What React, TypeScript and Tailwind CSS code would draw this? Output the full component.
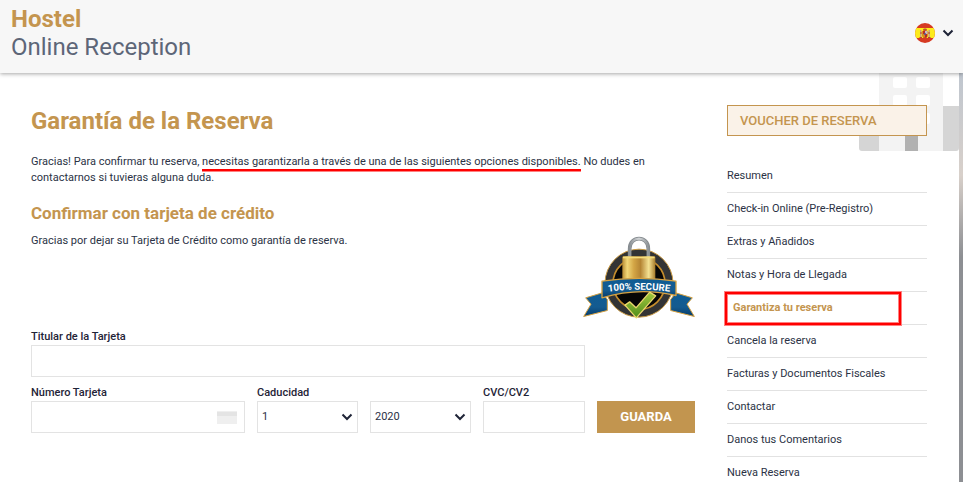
import { useState } from 'react';
import { clsx } from 'clsx';

interface MenuItem {
  readonly label: string;
  readonly active?: boolean;
}

const MENU_ITEMS: readonly MenuItem[] = [
  { label: 'Resumen' },
  { label: 'Check-in Online (Pre-Registro)' },
  { label: 'Extras y Añadidos' },
  { label: 'Notas y Hora de Llegada' },
  { label: 'Garantiza tu reserva', active: true },
  { label: 'Cancela la reserva' },
  { label: 'Facturas y Documentos Fiscales' },
  { label: 'Contactar' },
  { label: 'Danos tus Comentarios' },
  { label: 'Nueva Reserva' },
];

const MONTHS = ['1', '2', '3', '4', '5', '6', '7', '8', '9', '10', '11', '12'];
const YEARS = ['2020', '2021', '2022', '2023', '2024', '2025', '2026'];

const FIELD = 'block w-full h-8 border border-[#e3e3e3] bg-white px-1 text-[#2b3245] outline-none';
const LABEL = 'block font-medium leading-4 text-[#1f2437]';

function Chevron({ className }: { readonly className?: string }) {
  return (
    <svg viewBox="0 0 12 8" className={clsx('w-3 h-2', className)} fill="none" aria-hidden="true">
      <path d="M1.5 1.5 6 6l4.500-4.500" stroke="#1f2437" strokeWidth="2" />
    </svg>
  );
}

function SpainFlag() {
  return (
    <svg viewBox="0 0 20 20" className="w-5 h-5" aria-hidden="true">
      <clipPath id="flag">
        <circle cx="10" cy="10" r="10" />
      </clipPath>
      <g clipPath="url(#flag)">
        <path d="M0 0h20v20H0z" fill="#d63a22" />
        <path d="M0 5h20v10H0z" fill="#fdeb1b" />
        <path d="M5 7h1.500v7H5zM13.500 7H15v7h-1.500z" fill="#c9a184" />
        <path d="M4.500 14h2.500v1H4.500zM13 14h2.500v1H13zM5 9.500h2v1H5zM13 9.500h2v1h-2z" fill="#b8432b" />
        <path d="M7.500 8h5v4.500a2.500 2.500 0 0 1-5 0z" fill="#b92a25" />
        <path d="M10 8h2.500v3H10z" fill="#cdb9bd" />
        <path d="M7.500 11H10v3.500c-1.500 0-2.500-1-2.500-2z" fill="#d68a20" />
        <path d="M8 6.500c0-1.500 4-1.500 4 0L11.500 8h-3z" fill="#c4552a" />
        <circle cx="10" cy="11" r="1" fill="#4c5c94" />
      </g>
    </svg>
  );
}

function Header() {
  return (
    <header className="relative z-20 flex items-center justify-between bg-[#f7f7f7] pl-[11px] pr-[9px] pt-[5px] pb-3 shadow-[0_1px_4px_rgba(0,0,0,0.35)]">
      <a href="#" className="flex flex-col text-2xl leading-7">
        <span className="font-bold text-[#c4954f]">Hostel</span>
        <span className="text-[#5d6678]">Online Reception</span>
      </a>
      <button type="button" aria-label="Idioma: español" className="flex items-center gap-[7px]">
        <SpainFlag />
        <Chevron />
      </button>
    </header>
  );
}

function SecureSeal() {
  return (
    <svg viewBox="40 33 336 246" className="w-28 h-[83px]" role="img" aria-label="100% Secure">
      <defs>
        <linearGradient id="brass" x1="0" x2="1" y1="0" y2="0">
          <stop offset="0" stopColor="#b98d35" />
          <stop offset="0.15" stopColor="#f1d778" />
          <stop offset="0.35" stopColor="#d3a545" />
          <stop offset="0.55" stopColor="#b58534" />
          <stop offset="0.8" stopColor="#f5e293" />
          <stop offset="1" stopColor="#a67b2b" />
        </linearGradient>
        <linearGradient id="steel" x1="0" x2="1" y1="0" y2="0">
          <stop offset="0" stopColor="#8a9095" />
          <stop offset="0.5" stopColor="#d3d6d8" />
          <stop offset="1" stopColor="#8c9296" />
        </linearGradient>
        <linearGradient id="ribbon" x1="0" x2="0" y1="0" y2="1">
          <stop offset="0" stopColor="#0f5c94" />
          <stop offset="0.6" stopColor="#145b90" />
          <stop offset="1" stopColor="#073b69" />
        </linearGradient>
        <linearGradient id="tick" x1="0" x2="0" y1="0" y2="1">
          <stop offset="0" stopColor="#a3c83e" />
          <stop offset="1" stopColor="#4f8d1c" />
        </linearGradient>
        <path id="seal-arc" d="M100 201Q208 184 316 201" />
      </defs>
      <g stroke="#d6a243" strokeWidth="3" strokeLinejoin="round" fill="url(#ribbon)">
        <path d="M98 202 48 217l16 19-22 37 71-18v-33z" />
        <path d="m318 202 50 15-16 19 22 37-71-18v-33z" />
      </g>
      <circle cx="208" cy="173" r="102" fill="#333435" stroke="#c79842" strokeWidth="3" />
      <circle cx="208" cy="174" r="78" fill="#060606" stroke="#c58d2d" strokeWidth="5" />
      <path d="M180 94V70c0-41 56-41 56 0v24" fill="none" stroke="#82888c" strokeWidth="11" />
      <path d="M180 94V70c0-41 56-41 56 0v24" fill="none" stroke="url(#steel)" strokeWidth="7" />
      <rect x="158" y="92" width="99" height="80" rx="4" fill="url(#brass)" />
      <path d="M160 96h95" stroke="#f6dd7c" strokeWidth="5" />
      <path
        d="M97 167Q208 150 319 167v43q-111-26-222 7z"
        fill="url(#ribbon)"
        stroke="#d6a243"
        strokeWidth="4"
        strokeLinejoin="round"
      />
      <text className="font-[Roboto,sans-serif] font-bold" fontSize="29" fill="#fff" textAnchor="middle">
        <textPath href="#seal-arc" startOffset="50%">
          100% SECURE
        </textPath>
      </text>
      <path
        d="m166 239 14-10 19 18 41-47 18 11-58 66z"
        fill="url(#tick)"
        stroke="#ead86e"
        strokeWidth="4"
        strokeLinejoin="round"
      />
    </svg>
  );
}

function Building() {
  return (
    <svg viewBox="0 0 100 88" className="absolute right-0 -top-2.5 w-[100px] h-[88px]" aria-hidden="true">
      <path d="M0 43h20v45H3a3 3 0 0 1-3-3zM84 43h16v42a3 3 0 0 1-3 3H84z" fill="#d5d5d5" />
      <path d="M20 0h64v88H20z" fill="#f3f3f3" />
      <g fill="#fff">
        <rect x="34" y="14" width="14" height="11" rx="2" />
        <rect x="57" y="14" width="14" height="11" rx="2" />
        <rect x="34" y="32" width="14" height="11" rx="2" />
        <rect x="57" y="32" width="14" height="11" rx="2" />
        <rect x="57" y="50" width="14" height="11" rx="2" />
      </g>
      <path d="M46 68h13v20H46z" fill="#b1b1b1" />
    </svg>
  );
}

interface SelectProps {
  readonly label: string;
  readonly options: readonly string[];
}

function Select({ label, options }: SelectProps) {
  const [value, setValue] = useState(options[0]);
  return (
    <div className="relative">
      <select
        id={label}
        aria-label={label}
        value={value}
        onChange={(e) => setValue(e.target.value)}
        className={clsx(FIELD, 'appearance-none')}
      >
        {options.map((option) => (
          <option key={option}>{option}</option>
        ))}
      </select>
      <Chevron className="absolute right-[5px] top-3 pointer-events-none" />
    </div>
  );
}

function CardForm() {
  return (
    <form
      className="grid grid-cols-[214fr_101fr_101fr_102fr_98fr] gap-x-3 gap-y-2 items-end"
      onSubmit={(e) => e.preventDefault()}
    >
      <div className="col-span-4">
        <label htmlFor="holder" className={LABEL}>
          Titular de la Tarjeta
        </label>
        <input id="holder" type="text" className={FIELD} />
      </div>
      <div className="col-start-1">
        <label htmlFor="number" className={LABEL}>
          Número Tarjeta
        </label>
        <div className="relative">
          <input id="number" type="text" inputMode="numeric" className={FIELD} />
          <svg viewBox="0 0 20 13" className="absolute right-2 top-2.5 w-5 h-[13px]" aria-hidden="true">
            <path d="M0 0h20v13H0z" fill="#efefef" />
            <path d="M0 1h20v4H0z" fill="#e4e4e4" />
          </svg>
        </div>
      </div>
      <div>
        <label htmlFor="Mes" className={LABEL}>
          Caducidad
        </label>
        <Select label="Mes" options={MONTHS} />
      </div>
      <Select label="Año" options={YEARS} />
      <div>
        <label htmlFor="cvc" className={LABEL}>
          CVC/CV2
        </label>
        <input id="cvc" type="text" inputMode="numeric" className={FIELD} />
      </div>
      <button type="submit" className="h-8 bg-[#c2954f] text-[13px] font-bold text-white">
        GUARDA
      </button>
    </form>
  );
}

function Sidebar() {
  return (
    <aside className="w-[200px] shrink-0">
      <a
        href="#"
        className="relative z-10 block border border-[#c4954f] bg-[#faf2e8] px-3 py-1.5 text-[13px] leading-[17px] font-medium text-[#c4954f]"
      >
        VOUCHER DE RESERVA
      </a>
      <ul className="mt-6">
        {MENU_ITEMS.map((item) => (
          <li key={item.label} className="relative border-b border-[#e2e2e2] py-2 leading-4">
            <a href="#" className={clsx('block', item.active && 'pl-1.5 font-bold text-[#c4954f]')}>
              {item.label}
            </a>
            {item.active && (
              <span className="absolute -left-0.5 right-[26px] top-0 -bottom-px border-2 border-[#f00] shadow-[0_0_0_1px_#ff8080,inset_0_0_0_1px_#ff8080]" />
            )}
          </li>
        ))}
      </ul>
    </aside>
  );
}

export default function App() {
  return (
    <div className="flex h-screen flex-col overflow-hidden bg-white font-[Roboto,sans-serif] text-[11px] text-[#2b3245]">
      <Header />
      <div className="flex min-h-0 flex-1">
        <div className="relative flex flex-1 items-start gap-8 pl-[31px] pr-8 pt-8">
          <Building />
          <main className="min-w-0 flex-1">
            <h1 className="text-2xl leading-8 font-bold text-[#c4954f]">Garantía de la Reserva</h1>
            <p className="mt-[17px] leading-4">
              Gracias! Para confirmar tu reserva,{' '}
              <span className="border-b-2 border-[#f00] pb-px shadow-[0_1px_0_#ff8080]">
                necesitas garantizarla a través de una de las siguientes opciones disponibles.
              </span>{' '}
              No dudes en contactarnos si tuvieras alguna duda.
            </p>
            <h2 className="mt-[15px] text-[17px] leading-6 font-bold text-[#c4954f]">
              Confirmar con tarjeta de crédito
            </h2>
            <div className="mt-2 mb-2.5 flex items-start justify-between">
              <p className="leading-4">Gracias por dejar su Tarjeta de Crédito como garantía de reserva.</p>
              <div className="pt-[3px]">
                <SecureSeal />
              </div>
            </div>
            <CardForm />
          </main>
          <Sidebar />
        </div>
        <div className="w-1 bg-linear-to-b from-[#bfc6cf] via-[#d8d0ca] via-25% to-[#8d8f93] to-45%" />
      </div>
    </div>
  );
}
